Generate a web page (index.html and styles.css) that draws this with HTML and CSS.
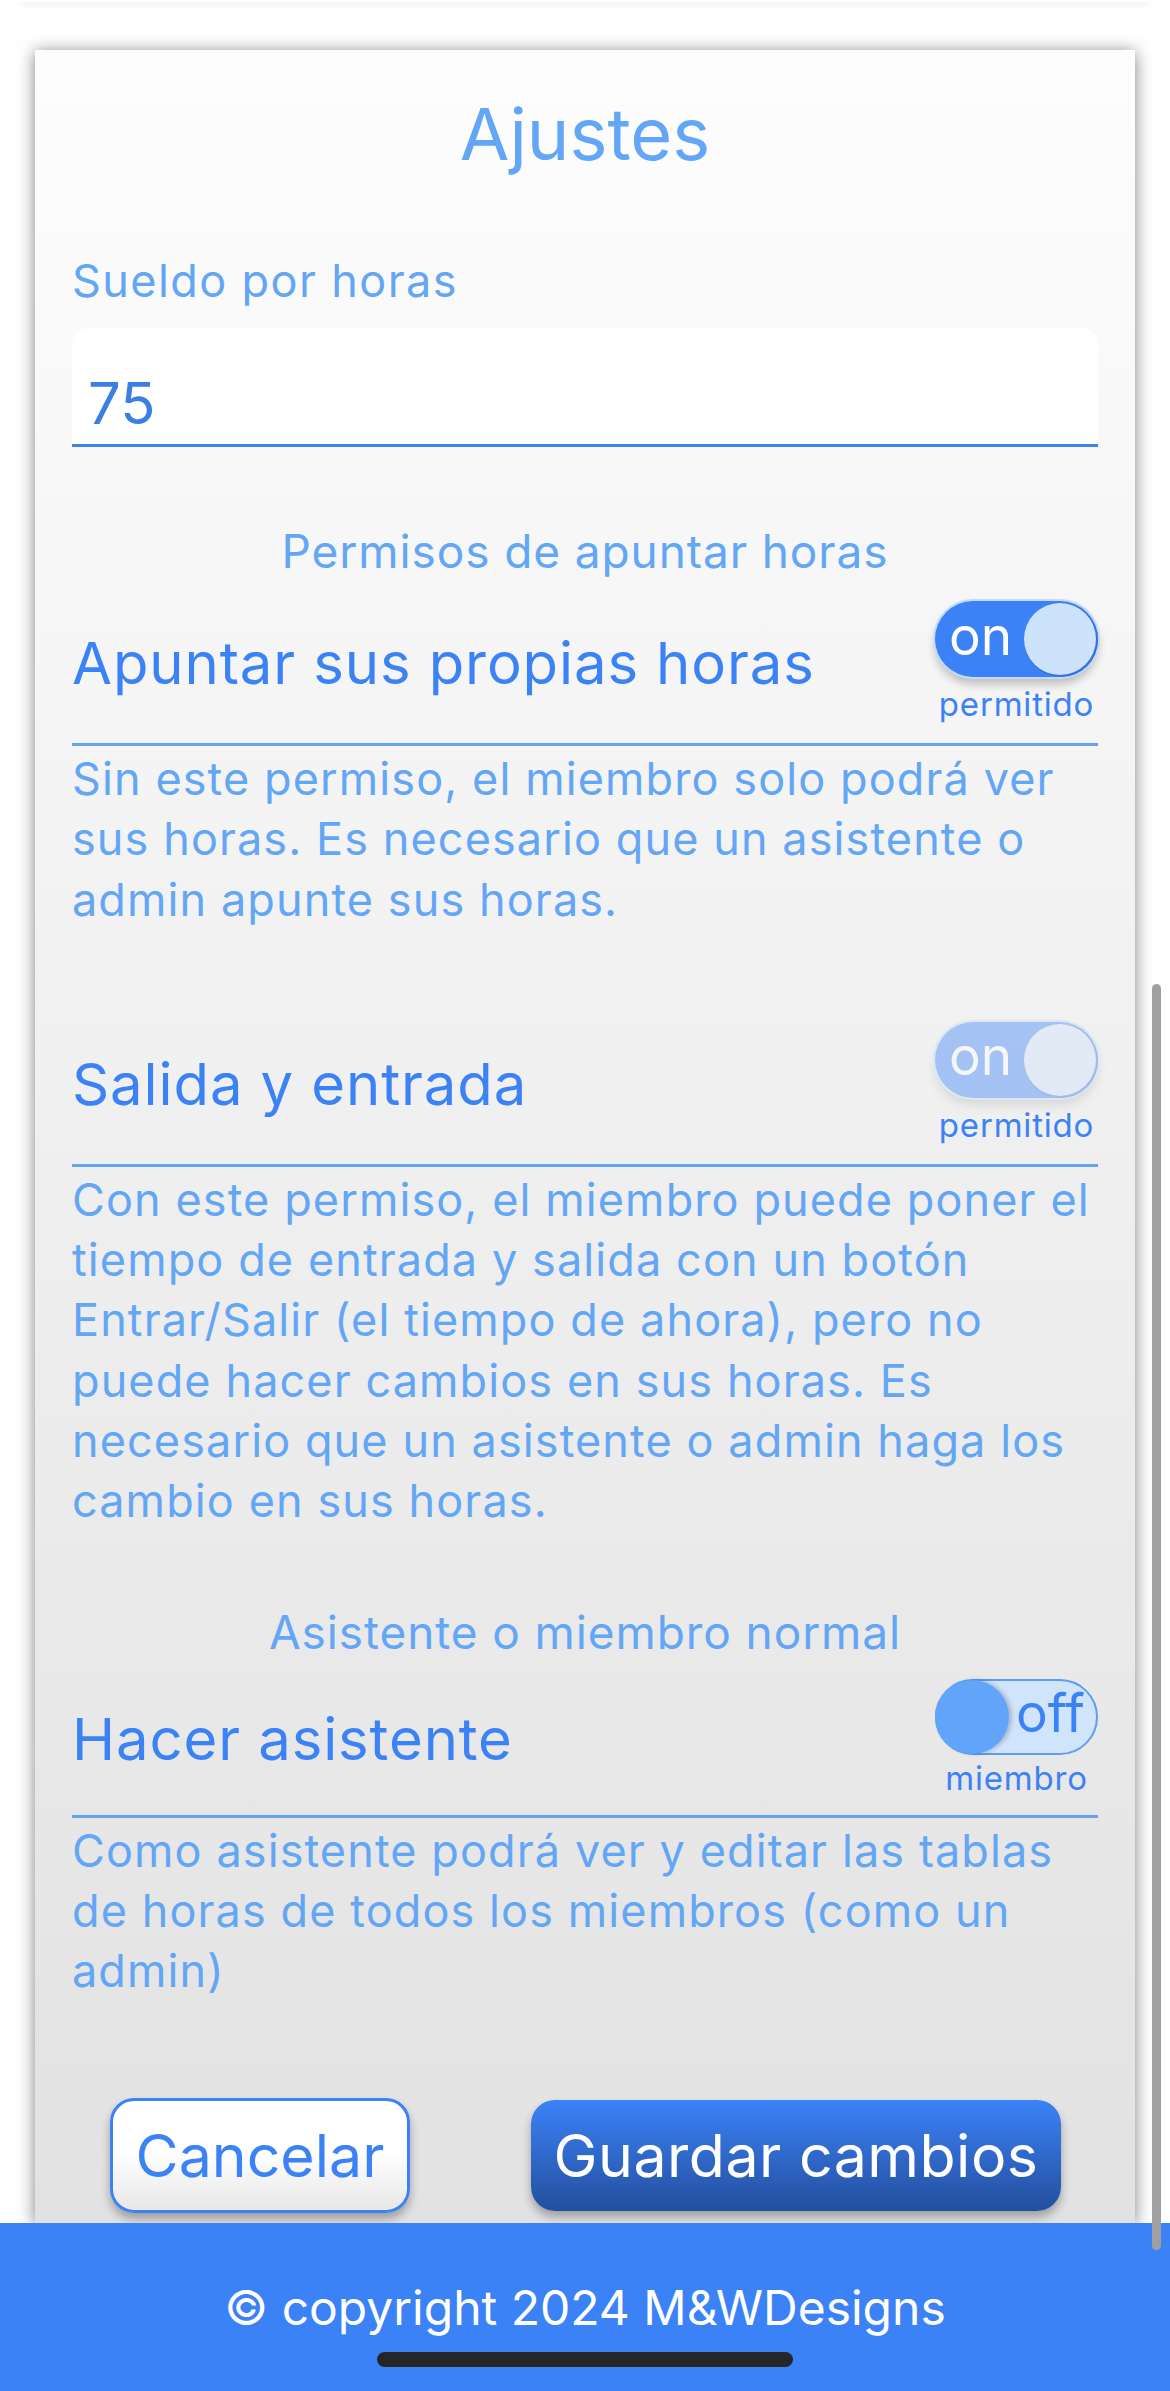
FILE: index.html
```html
<!DOCTYPE html>
<html lang="es">
<head>
<meta charset="utf-8">
<title>Ajustes</title>
<link rel="stylesheet" href="styles.css">
</head>
<body>
<div class="prev-card"></div>
<main class="card">
  <h1 class="card-title">Ajustes</h1>
  <label class="field-label" for="wage">Sueldo por horas</label>
  <input class="field-input" id="wage" type="text" value="75">

  <h2 class="section-head">Permisos de apuntar horas</h2>
  <div class="perm-row">
    <span class="perm-title">Apuntar sus propias horas</span>
    <div class="switch-col">
      <div class="switch on"><span class="switch-text">on</span><span class="knob"></span></div>
      <span class="switch-label">permitido</span>
    </div>
  </div>
  <p class="perm-desc">Sin este permiso, el miembro solo podrá ver sus horas. Es necesario que un asistente o admin apunte sus horas.</p>

  <div class="perm-row row-gap">
    <span class="perm-title">Salida y entrada</span>
    <div class="switch-col">
      <div class="switch on disabled"><span class="switch-text">on</span><span class="knob"></span></div>
      <span class="switch-label">permitido</span>
    </div>
  </div>
  <p class="perm-desc">Con este permiso, el miembro puede poner el tiempo de entrada y salida con un botón Entrar/Salir (el tiempo de ahora), pero no puede hacer cambios en sus horas. Es necesario que un asistente o admin haga los cambio en sus horas.</p>

  <h2 class="section-head section-gap">Asistente o miembro normal</h2>
  <div class="perm-row row-tight">
    <span class="perm-title">Hacer asistente</span>
    <div class="switch-col">
      <div class="switch off"><span class="knob"></span><span class="switch-text">off</span></div>
      <span class="switch-label">miembro</span>
    </div>
  </div>
  <p class="perm-desc">Como asistente podrá ver y editar las tablas de horas de todos los miembros (como un admin)</p>

  <div class="actions">
    <button class="btn btn-cancel" type="button">Cancelar</button>
    <button class="btn btn-save" type="button">Guardar cambios</button>
  </div>
</main>
<footer class="footer">
  <p class="footer-text">© copyright 2024 M&amp;WDesigns</p>
  <div class="home-bar"></div>
</footer>
<div class="scroll-thumb"></div>
</body>
</html>
```

FILE: styles.css
```css
* { box-sizing: border-box; }

html, body {
  margin: 0;
  padding: 0;
}

body {
  background: #ffffff;
  font-family: Inter, "Noto Sans", "Liberation Sans", sans-serif;
  font-weight: 400;
  width: 1170px;
  overflow: hidden;
}

.prev-card {
  height: 2px;
  margin: 0 22px;
  background: #ffffff;
  box-shadow: 0 2px 6px rgba(0, 0, 0, 0.16);
}

.card {
  display: flex;
  flex-direction: column;
  margin: 48px 35px 0;
  padding: 0 37px 10px;
  height: 2173px;
  background: linear-gradient(#fdfdfd, #e2e2e2);
  box-shadow: 0 2px 16px rgba(0, 0, 0, 0.5);
}

.card-title {
  margin: 42px 0 0;
  font-size: 72px;
  line-height: 84px;
  font-weight: 400;
  text-align: center;
  color: #63a6f8;
}

.field-label {
  margin-top: 79px;
  font-size: 45px;
  line-height: 52px;
  letter-spacing: 1.4px;
  color: #63a6f6;
}

.field-input {
  margin-top: 21px;
  width: 100%;
  height: 119px;
  padding: 40px 16px 6px;
  border: none;
  border-bottom: 3px solid #3f82e8;
  border-radius: 16px 16px 0 0;
  background: #ffffff;
  font-family: inherit;
  font-size: 58px;
  line-height: 70px;
  color: #3b7fe3;
  outline: none;
}

.section-head {
  margin: 78px 0 0;
  font-size: 46px;
  line-height: 53px;
  letter-spacing: 0.9px;
  font-weight: 400;
  text-align: center;
  color: #63a6f6;
}

.section-gap {
  margin-top: 74px;
}

.perm-row {
  display: flex;
  align-items: center;
  justify-content: space-between;
  margin-top: 21px;
  padding-bottom: 20px;
  border-bottom: 3px solid #65a3f0;
}

.row-gap {
  margin-top: 90px;
}

.row-tight {
  margin-top: 18px;
  padding-bottom: 18px;
}

.row-tight .switch-col {
  gap: 4px;
}

.perm-title {
  padding-top: 4px;
  font-size: 58px;
  line-height: 68px;
  letter-spacing: 0.9px;
  color: #3b82f6;
}

.switch-col {
  display: flex;
  flex-direction: column;
  align-items: center;
  gap: 8px;
  padding-top: 2px;
}

.switch {
  display: flex;
  align-items: center;
  justify-content: space-between;
  width: 163px;
  height: 76px;
  border-radius: 38px;
}

.switch.on {
  padding: 0 2px 0 14px;
  background: #3b82f6;
  box-shadow: 0 0 0 2px #c3dbfa, 0 7px 10px rgba(0, 0, 0, 0.24);
}

.switch.on .knob {
  width: 72px;
  height: 72px;
  border-radius: 50%;
  background: #cde2fb;
  box-shadow: 1px 1px 0 1px #3474dc;
}

.switch.on .switch-text {
  font-size: 53px;
  line-height: 1;
  margin-top: -6px;
  color: #ffffff;
}

.switch.disabled {
  opacity: 0.42;
}

.switch.off {
  padding: 0 11px 0 0;
  background: #d0e4fc;
  border: 2px solid #5d9df2;
}

.switch.off .knob {
  width: 74px;
  height: 74px;
  margin-left: -2px;
  border-radius: 50%;
  background: #60a5fa;
  box-shadow: 3px 0 4px rgba(0, 0, 0, 0.2);
}

.switch.off .switch-text {
  font-size: 53px;
  line-height: 1;
  margin-top: -6px;
  color: #3b82f6;
}

.switch-label {
  font-size: 33px;
  line-height: 38px;
  letter-spacing: 0.8px;
  color: #3b82f6;
}

.perm-desc {
  margin: 3px 0 0;
  font-size: 45px;
  line-height: 60.3px;
  letter-spacing: 1.1px;
  color: #63a6f6;
}

.actions {
  display: flex;
  align-items: center;
  justify-content: space-between;
  margin-top: auto;
  padding: 0 37px 0 38px;
}

.btn {
  font-family: inherit;
  font-size: 59px;
  line-height: 1;
  padding: 0;
  cursor: pointer;
}

.btn-cancel {
  width: 300px;
  height: 115px;
  border: 3px solid #3b82f6;
  border-radius: 24px;
  background: linear-gradient(#ffffff 45%, #e8e8e8);
  color: #3b82f6;
  box-shadow: 0 6px 10px rgba(0, 0, 0, 0.3);
}

.btn-save {
  width: 530px;
  height: 111px;
  border: none;
  border-radius: 24px;
  background: linear-gradient(#3b82f6, #244f9f);
  color: #ffffff;
  letter-spacing: 0.5px;
  box-shadow: 0 6px 10px rgba(0, 0, 0, 0.3);
}

.footer {
  position: relative;
  display: flex;
  flex-direction: column;
  align-items: center;
  height: 168px;
  padding-top: 57px;
  background: #3b82f6;
}

.footer-text {
  margin: 0;
  font-size: 48px;
  line-height: 56px;
  color: #ffffff;
}

.home-bar {
  margin-top: 16px;
  width: 416px;
  height: 15px;
  border-radius: 8px;
  background: #262628;
}

.scroll-thumb {
  position: fixed;
  top: 984px;
  right: 9px;
  width: 9px;
  height: 1266px;
  border-radius: 5px;
  background: #a0a0a0;
}
```
